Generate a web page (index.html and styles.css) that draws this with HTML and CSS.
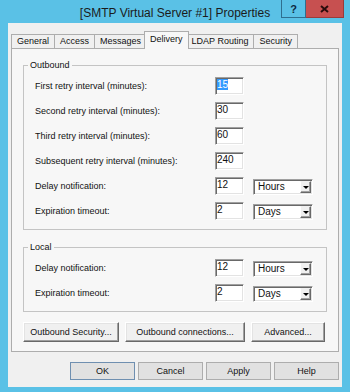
FILE: index.html
```html
<!DOCTYPE html>
<html lang="en">
<head>
  <meta charset="UTF-8">
  <meta name="viewport" content="width=device-width, initial-scale=1.0">
  <title>[SMTP Virtual Server #1] Properties</title>
  <link rel="stylesheet" href="styles.css">
</head>
<body>

  <div class="window">
    <div class="titlebar">
      <div class="title">[SMTP Virtual Server #1] Properties</div>
      <div class="controls">
        <div class="help-btn">?</div>
        <div class="close-btn">
          <svg width="9" height="8" viewBox="0 0 9 8">
            <path d="M1 1 L8 7 M8 1 L1 7" stroke="#2a0c0c" stroke-width="2" fill="none"/>
          </svg>
        </div>
      </div>
    </div>

    <div class="client">
      <div class="tabs">
        <div class="tab">General</div>
        <div class="tab">Access</div>
        <div class="tab">Messages</div>
        <div class="tab active">Delivery</div>
        <div class="tab">LDAP Routing</div>
        <div class="tab">Security</div>
      </div>

      <div class="panel">
        <fieldset class="group">
          <legend>Outbound</legend>
          <div class="rows">
            <span class="lbl">First retry interval (minutes):</span>
            <div class="field"><span class="selected">15</span></div>
            <span class="lbl">Second retry interval (minutes):</span>
            <div class="field">30</div>
            <span class="lbl">Third retry interval (minutes):</span>
            <div class="field">60</div>
            <span class="lbl">Subsequent retry interval (minutes):</span>
            <div class="field">240</div>
            <span class="lbl">Delay notification:</span>
            <div class="field">12</div>
            <div class="select"><span class="select-text">Hours</span><span class="select-arrow"></span></div>
            <span class="lbl">Expiration timeout:</span>
            <div class="field">2</div>
            <div class="select"><span class="select-text">Days</span><span class="select-arrow"></span></div>
          </div>
        </fieldset>

        <fieldset class="group local">
          <legend>Local</legend>
          <div class="rows">
            <span class="lbl">Delay notification:</span>
            <div class="field">12</div>
            <div class="select"><span class="select-text">Hours</span><span class="select-arrow"></span></div>
            <span class="lbl">Expiration timeout:</span>
            <div class="field">2</div>
            <div class="select"><span class="select-text">Days</span><span class="select-arrow"></span></div>
          </div>
        </fieldset>

        <div class="panel-buttons">
          <button class="classic security">Outbound Security...</button>
          <button class="classic connections">Outbound connections...</button>
          <button class="classic advanced">Advanced...</button>
        </div>
      </div>

      <div class="dialog-buttons">
        <button class="dlg default">OK</button>
        <button class="dlg">Cancel</button>
        <button class="dlg">Apply</button>
        <button class="dlg">Help</button>
      </div>
    </div>
  </div>

</body>
</html>
```

FILE: styles.css
```css
body {
  margin: 0;
  font-family: 'Liberation Sans', Arial, sans-serif;
  font-size: 9px;
  color: #111;
}
.window {
  width: 350px;
  height: 392px;
  background: #5ac1e6;
  display: flex;
  flex-direction: column;
}
.titlebar {
  height: 23px;
  display: grid;
  grid-template-columns: 1fr auto 1fr;
}
.title {
  grid-column: 2;
  font-size: 12px;
  line-height: 18px;
  padding-top: 4px;
  color: #1b1b1b;
  white-space: nowrap;
}
.controls {
  justify-self: end;
  align-self: start;
  display: flex;
  height: 18px;
  margin-right: 6px;
}
.help-btn {
  width: 23px;
  border: 1px solid #2f6f8f;
  border-top: none;
  display: flex;
  align-items: center;
  justify-content: center;
  font-size: 11px;
  font-weight: bold;
  color: #0d2840;
}
.close-btn {
  width: 37px;
  background: #c75050;
  border-bottom: 1px solid #9b3b3b;
  border-right: 1px solid #9b3b3b;
  display: flex;
  align-items: center;
  justify-content: center;
}
.client {
  flex: 1;
  margin: 0 8px 5px;
  background: #f0f0f0;
  padding: 8px 3px 6px;
}

/* tabs */
.tabs {
  display: flex;
  align-items: flex-end;
  height: 17px;
}
.tab {
  height: 13px;
  line-height: 13px;
  padding: 0 5px;
  border: 1px solid #adadad;
  border-bottom: none;
  margin-left: -1px;
  background: #f0f0f0;
  white-space: nowrap;
}
.tab:first-child {
  margin-left: 0;
}
.tab.active {
  height: 17px;
  line-height: 15px;
  margin: 0 -2px -1px -3px;
  background: #f7f7f7;
  z-index: 1;
}
.panel {
  border: 1px solid #adadad;
  background: #f7f7f7;
  padding: 11px 11px 9px;
}

/* group boxes */
.group {
  margin: 0;
  padding: 6px 0 9px;
  border: 1px solid #c4c4c4;
}
.group legend {
  margin-left: 4px;
  padding: 0 2px;
  line-height: 11px;
}
.local {
  margin-top: 12px;
}
.rows {
  display: grid;
  grid-template-columns: 171px 29px 60px;
  grid-auto-rows: 18px;
  column-gap: 9px;
  row-gap: 7px;
  padding-left: 11px;
}
.lbl {
  grid-column: 1;
  align-self: center;
  line-height: 11px;
  white-space: nowrap;
}
.field {
  box-sizing: border-box;
  height: 18px;
  background: #fff;
  border: 1px solid;
  border-color: #a0a0a0 #fff #fff #a0a0a0;
  box-shadow: inset 1px 1px 0 #696969, inset -1px -1px 0 #e3e3e3;
  padding: 1px 0 0 1px;
  font-size: 10px;
  line-height: 11px;
}
.selected {
  background: #3399ff;
  color: #fff;
}
.select {
  box-sizing: border-box;
  height: 16px;
  align-self: end;
  display: flex;
  background: #fff;
  border: 1px solid;
  border-color: #a0a0a0 #fff #fff #a0a0a0;
  box-shadow: inset 1px 1px 0 #696969, inset -1px -1px 0 #e3e3e3;
  padding: 1px;
}
.select-text {
  flex: 1;
  font-size: 10px;
  line-height: 12px;
  padding-left: 3px;
}
.select-arrow {
  box-sizing: border-box;
  width: 11px;
  background: #f0f0f0;
  border: 1px solid;
  border-color: #f0f0f0 #696969 #696969 #fff;
  box-shadow: inset -1px -1px 0 #a0a0a0;
  display: flex;
  align-items: center;
  justify-content: center;
}
.select-arrow::after {
  content: "";
  border-left: 3px solid transparent;
  border-right: 3px solid transparent;
  border-top: 3px solid #000;
}

/* buttons */
button {
  font-family: inherit;
  font-size: 9px;
  color: #111;
  padding: 0;
  box-sizing: border-box;
}
.panel-buttons {
  display: flex;
  gap: 6px;
  margin-top: 10px;
}
.classic {
  height: 20px;
  background: #f0f0f0;
  border: 1px solid;
  border-color: #fff #696969 #696969 #fff;
  box-shadow: inset -1px -1px 0 #a0a0a0, inset 1px 1px 0 #e3e3e3;
}
.security {
  width: 96px;
}
.connections {
  width: 120px;
}
.advanced {
  width: 74px;
}
.dialog-buttons {
  display: flex;
  justify-content: flex-end;
  gap: 3px;
  margin-top: 10px;
}
.dlg {
  width: 65px;
  height: 18px;
  background: #e1e1e1;
  border: 1px solid #adadad;
}
.dlg.default {
  border-color: #6f8fb0;
}
```
